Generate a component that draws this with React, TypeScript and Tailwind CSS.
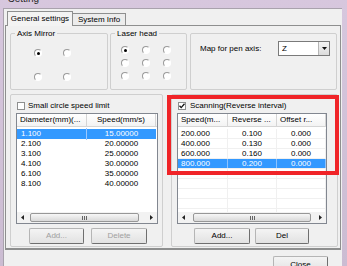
import type { ReactNode } from "react";

const leftRows = [
  ["1.100", "15.00000"],
  ["2.100", "20.00000"],
  ["3.100", "25.00000"],
  ["4.100", "30.00000"],
  ["6.100", "35.00000"],
  ["8.100", "40.00000"],
];

const scanRows = [
  ["200.000", "0.100", "0.000"],
  ["400.000", "0.130", "0.000"],
  ["600.000", "0.160", "0.000"],
  ["800.000", "0.200", "0.000"],
];

function Radio({ checked = false }: { checked?: boolean }) {
  return (
    <span className="flex h-[8px] w-[8px] items-center justify-center rounded-full border border-b-white border-l-[#9a9a9a] border-r-white border-t-[#9a9a9a] bg-white">
      {checked && <span className="h-[3px] w-[3px] rounded-full bg-black" />}
    </span>
  );
}

function Checkbox({ checked = false }: { checked?: boolean }) {
  return (
    <span className="flex h-[8px] w-[8px] items-center justify-center border border-[#8e8f8f] bg-white">
      {checked && (
        <svg width="6" height="6" viewBox="0 0 6 6">
          <path d="M0.5 2.8 L2.2 4.6 L5.5 0.8" fill="none" stroke="#111" strokeWidth="1.3" />
        </svg>
      )}
    </span>
  );
}

function GroupBox({ label, className, children }: { label?: string; className: string; children: ReactNode }) {
  return (
    <fieldset className={`rounded-[2px] border border-[#cfcfcf] ${className}`}>
      {label && <legend className="ml-[4px] px-[2px] leading-[9px]">{label}</legend>}
      {children}
    </fieldset>
  );
}

function Button({ children, disabled = false, className }: { children: ReactNode; disabled?: boolean; className: string }) {
  return (
    <button
      type="button"
      className={`flex h-[16px] items-center justify-center rounded-[2px] border border-[#b5b5b5] border-b-[#6f6f6f] border-r-[#6f6f6f] bg-gradient-to-b from-[#f4f4f4] to-[#e2e2e2] leading-none ${
        disabled ? "text-[#a0a0a0]" : "text-black"
      } ${className}`}
    >
      {children}
    </button>
  );
}

function HScroll({ thumbLeft, thumbWidth }: { thumbLeft: string; thumbWidth: string }) {
  return (
    <div className="flex h-[11px] items-center bg-[#f2f2f2] px-[4px]">
      <svg width="3" height="5" viewBox="0 0 3 5" className="shrink-0">
        <path d="M3 0 L0 2.5 L3 5 Z" fill="#222" />
      </svg>
      <div className={`flex h-[9px] items-center justify-center rounded-[2px] border border-[#979797] bg-gradient-to-b from-[#f7f7f7] to-[#d9d9d9] ${thumbLeft} ${thumbWidth}`}>
        <span className="flex gap-[1px]">
          <span className="h-[4px] w-px bg-[#666]" />
          <span className="h-[4px] w-px bg-[#666]" />
          <span className="h-[4px] w-px bg-[#666]" />
        </span>
      </div>
      <span className="flex-1" />
      <svg width="3" height="5" viewBox="0 0 3 5" className="shrink-0">
        <path d="M0 0 L3 2.5 L0 5 Z" fill="#222" />
      </svg>
    </div>
  );
}

function HeaderCell({ children, className }: { children: ReactNode; className: string }) {
  return (
    <div className={`flex h-full items-center truncate border-r border-[#d5d5d5] ${className}`}>{children}</div>
  );
}

export default function App() {
  return (
    <div className="relative h-[266px] w-[347px] overflow-hidden bg-gradient-to-b from-[#d7c7de] to-[#cbbcd2] font-['Liberation_Sans',Arial,sans-serif] text-[8px] text-black">
      <div className="h-[8px] overflow-hidden pl-[8px]">
        <div className="-mt-[7px] text-[10px] leading-[12px] text-[#2a2a2a]">Setting</div>
      </div>

      <div className="ml-[3px] h-[258px] w-[339px] border-l border-t border-[#a9a2ad] bg-[#f0f0f0]">
        <div className="relative z-10 mt-[2px] flex h-[15px] items-end pl-[3px]">
          <div className="flex h-[15px] w-[66px] items-center justify-center border border-b-0 border-[#8e8f8f] bg-[#f3f3f3] pb-[1px]">
            General settings
          </div>
          <div className="mb-px flex h-[12px] w-[53px] items-center justify-center border-r border-t border-[#8e8f8f] bg-[#ececec]">
            System Info
          </div>
        </div>

        <div className="-mt-px ml-[1px] h-[225px] w-[336px] border border-b-2 border-[#8e8f8f] bg-[#f0f0f0] pl-[4px] pt-[3px]">
          <div className="flex h-[61px] items-start">
            <GroupBox label="Axis Mirror" className="h-[61px] w-[98px]">
              <div className="grid grid-cols-[8px_8px] gap-x-[21px] gap-y-[16px] pl-[23px] pt-[11px]">
                <Radio checked />
                <Radio />
                <Radio />
                <Radio />
              </div>
            </GroupBox>
            <GroupBox label="Laser head" className="ml-[2px] h-[61px] w-[77px]">
              <div className="grid grid-cols-[8px_8px_8px] gap-x-[13px] gap-y-[5px] pl-[10px] pt-[8px]">
                <Radio checked />
                <Radio />
                <Radio />
                <Radio />
                <Radio />
                <Radio />
                <Radio />
                <Radio />
                <Radio />
              </div>
            </GroupBox>
            <div className="ml-[3px] mt-[4px] flex h-[57px] w-[147px] items-start rounded-[2px] border border-[#cfcfcf] pl-[9px] pr-[6px] pt-[7px]">
              <span className="flex h-[15px] flex-1 items-center">Map for pen axis:</span>
              <div className="flex h-[15px] w-[52px] items-center border border-[#7a7a7a] bg-white pl-[3px]">
                <span className="flex-1">Z</span>
                <span className="flex h-[13px] w-[11px] items-center justify-center border-l border-[#b5b5b5] bg-gradient-to-b from-[#f4f4f4] to-[#dcdcdc]">
                  <svg width="5" height="3" viewBox="0 0 5 3">
                    <path d="M0 0 L5 0 L2.5 3 Z" fill="#111" />
                  </svg>
                </span>
              </div>
            </div>
          </div>

          <div className="mt-[4px] flex">
            <div className="h-[153px] w-[153px] rounded-[2px] border border-[#cfcfcf] pl-[5px] pt-[7px]">
              <div className="flex h-[8px] items-center gap-[3px] pl-[1px]">
                <Checkbox />
                <span>Small circle speed limit</span>
              </div>
              <div className="mt-[3px] flex h-[111px] w-[142px] flex-col border border-[#828790] bg-white">
                <div className="flex h-[13px] shrink-0 border-b border-[#d5d5d5] bg-gradient-to-b from-white to-[#f3f3f3]">
                  <HeaderCell className="w-[70px] pl-[3px]">Diameter(mm)(...</HeaderCell>
                  <HeaderCell className="w-[69px] justify-center">Speed(mm/s)</HeaderCell>
                </div>
                <div className="flex-1 overflow-hidden pt-[2px]">
                  {leftRows.map(([d, s], i) => (
                    <div
                      key={d}
                      className={`flex h-[10px] w-[139px] items-center ${i === 0 ? "bg-[#3399ff] text-white" : ""}`}
                    >
                      <span className={`w-[70px] pl-[4px] ${i === 0 ? "border-r border-[#9cc9ff]" : ""}`}>{d}</span>
                      <span className="w-[69px] text-center">{s}</span>
                    </div>
                  ))}
                </div>
                <HScroll thumbLeft="ml-[6px]" thumbWidth="w-[109px]" />
              </div>
              <div className="mt-[4px] flex gap-[7px] pl-[13px]">
                <Button disabled className="w-[55px]">Add...</Button>
                <Button disabled className="w-[56px]">Delete</Button>
              </div>
            </div>

            <div className="ml-[8px] h-[153px] w-[167px] rounded-[2px] border border-[#cfcfcf] pl-[5px] pt-[7px]">
              <div className="flex h-[8px] items-center gap-[4px] pl-[1px]">
                <Checkbox checked />
                <span>Scanning(Reverse interval)</span>
              </div>
              <div className="mt-[3px] flex h-[111px] w-[150px] flex-col border border-[#828790] bg-white">
                <div className="flex h-[13px] shrink-0 border-b border-[#d5d5d5] bg-gradient-to-b from-white to-[#f3f3f3]">
                  <HeaderCell className="w-[50px] pl-[3px]">Speed(m...</HeaderCell>
                  <HeaderCell className="w-[49px] pl-[4px]">Reverse ...</HeaderCell>
                  <HeaderCell className="w-[49px] pl-[3px]">Offset r...</HeaderCell>
                </div>
                <div className="flex-1 overflow-hidden pt-[2px]">
                  {[...scanRows, ["", "", ""], ["", "", ""], ["", "", ""], ["", "", ""], ["", "", ""]].map(([a, b, c], i) => (
                    <div
                      key={i}
                      className={`flex h-[10px] items-center border-b border-[#f0f0f0] ${i === 3 ? "bg-[#3399ff] text-white" : ""}`}
                    >
                      <span className={`h-full w-[50px] border-r pl-[3px] leading-[9px] ${i === 3 ? "border-[#8cc3ff]" : "border-[#f0f0f0]"}`}>{a}</span>
                      <span className={`h-full w-[49px] border-r text-center leading-[9px] ${i === 3 ? "border-[#8cc3ff]" : "border-[#f0f0f0]"}`}>{b}</span>
                      <span className={`h-full w-[49px] border-r text-center leading-[9px] ${i === 3 ? "border-[#8cc3ff]" : "border-[#f0f0f0]"}`}>{c}</span>
                    </div>
                  ))}
                </div>
                <HScroll thumbLeft="ml-[8px]" thumbWidth="w-[118px]" />
              </div>
              <div className="mt-[4px] flex gap-[5px] pl-[17px]">
                <Button className="w-[56px]">Add...</Button>
                <Button className="w-[54px]">Del</Button>
              </div>
            </div>
          </div>
        </div>

        <div className="mt-[6px] flex justify-end pr-[14px]">
          <Button className="h-[17px] w-[55px]">Close</Button>
        </div>
      </div>

      {/* annotation highlight */}
      <div className="absolute left-[167px] top-[95px] h-[80px] w-[172px] border-[4px] border-[#f02428]" />
    </div>
  );
}
